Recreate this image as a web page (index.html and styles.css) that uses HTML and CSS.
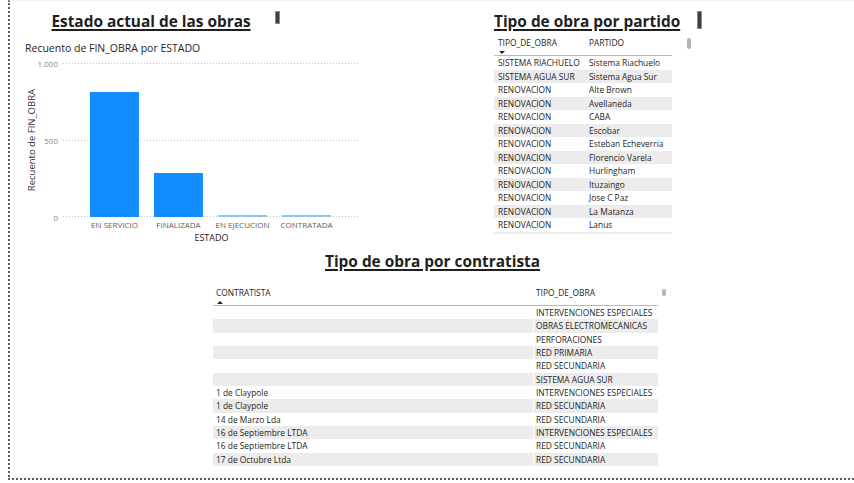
FILE: index.html
```html
<!DOCTYPE html>
<html lang="es">
<head>
<meta charset="utf-8">
<title>Obras</title>
<link rel="stylesheet" href="styles.css">
</head>
<body>
<div class="canvas">
  <div class="top-row">
    <section class="chart-visual">
      <div class="title-box title-left">
        <h2 class="v-title">Estado actual de las obras</h2>
        <span class="marker marker-short"></span>
      </div>
      <div class="chart-sub">Recuento de FIN_OBRA por ESTADO</div>
      <div class="chart-body">
        <div class="y-title"><span>Recuento de FIN_OBRA</span></div>
        <div class="y-ticks"><span>1.000</span><span>500</span><span>0</span></div>
        <div class="plot">
          <div class="bar" style="height:81.2%"></div>
          <div class="bar" style="height:28.6%"></div>
          <div class="bar bar-thin" style="height:1.3%"></div>
          <div class="bar bar-thin" style="height:1.3%"></div>
        </div>
        <div class="x-labels">
          <span>EN SERVICIO</span><span>FINALIZADA</span><span>EN EJECUCION</span><span>CONTRATADA</span>
        </div>
        <div class="x-title">ESTADO</div>
      </div>
    </section>

    <section class="partido-visual">
      <div class="title-box">
        <h2 class="v-title">Tipo de obra por partido</h2>
        <span class="marker marker-tall"></span>
      </div>
      <div class="table-wrap">
        <div class="tbl tbl-partido">
          <div class="thead">
            <div class="th"><span>TIPO_DE_OBRA</span><i class="sort sort-down"></i></div>
            <div class="th"><span>PARTIDO</span></div>
          </div>
          <div class="tbody">
            <div class="tr"><div>SISTEMA RIACHUELO</div><div>Sistema Riachuelo</div></div>
            <div class="tr"><div>SISTEMA AGUA SUR</div><div>Sistema Agua Sur</div></div>
            <div class="tr"><div>RENOVACION</div><div>Alte Brown</div></div>
            <div class="tr"><div>RENOVACION</div><div>Avellaneda</div></div>
            <div class="tr"><div>RENOVACION</div><div>CABA</div></div>
            <div class="tr"><div>RENOVACION</div><div>Escobar</div></div>
            <div class="tr"><div>RENOVACION</div><div>Esteban Echeverria</div></div>
            <div class="tr"><div>RENOVACION</div><div>Florencio Varela</div></div>
            <div class="tr"><div>RENOVACION</div><div>Hurlingham</div></div>
            <div class="tr"><div>RENOVACION</div><div>Ituzaingo</div></div>
            <div class="tr"><div>RENOVACION</div><div>Jose C Paz</div></div>
            <div class="tr"><div>RENOVACION</div><div>La Matanza</div></div>
            <div class="tr"><div>RENOVACION</div><div>Lanus</div></div>
            <div class="tr"><div></div><div></div></div>
          </div>
        </div>
        <div class="scroll scroll-partido"><span class="thumb"></span></div>
      </div>
    </section>
  </div>

  <section class="contratista-visual">
    <h2 class="v-title bottom-title">Tipo de obra por contratista</h2>
    <div class="table-wrap">
      <div class="tbl tbl-contratista">
        <div class="thead">
          <div class="th"><span>CONTRATISTA</span><i class="sort sort-up"></i></div>
          <div class="th"><span>TIPO_DE_OBRA</span></div>
        </div>
        <div class="tbody">
          <div class="tr"><div></div><div>INTERVENCIONES ESPECIALES</div></div>
          <div class="tr"><div></div><div>OBRAS ELECTROMECANICAS</div></div>
          <div class="tr"><div></div><div>PERFORACIONES</div></div>
          <div class="tr"><div></div><div>RED PRIMARIA</div></div>
          <div class="tr"><div></div><div>RED SECUNDARIA</div></div>
          <div class="tr"><div></div><div>SISTEMA AGUA SUR</div></div>
          <div class="tr"><div>1 de Claypole</div><div>INTERVENCIONES ESPECIALES</div></div>
          <div class="tr"><div>1 de Claypole</div><div>RED SECUNDARIA</div></div>
          <div class="tr"><div>14 de Marzo Lda</div><div>RED SECUNDARIA</div></div>
          <div class="tr"><div>16 de Septiembre LTDA</div><div>INTERVENCIONES ESPECIALES</div></div>
          <div class="tr"><div>16 de Septiembre LTDA</div><div>RED SECUNDARIA</div></div>
          <div class="tr"><div>17 de Octubre Ltda</div><div>RED SECUNDARIA</div></div>
        </div>
      </div>
      <div class="scroll scroll-contratista"><span class="thumb"></span></div>
    </div>
  </section>
</div>
</body>
</html>
```

FILE: styles.css
```css
* { box-sizing: border-box; }

html, body {
  margin: 0;
  padding: 0;
  background: #ffffff;
}

body {
  font-family: "Open Sans", "Noto Sans", sans-serif;
  color: #252423;
  overflow: hidden;
}

.canvas {
  margin-left: 8px;
  width: 846px;
  height: 480px;
  border-left: 2px dotted #5c5c5c;
  border-bottom: 2px dotted #5c5c5c;
  border-top: 1px solid #f2f2f2;
}

.top-row {
  display: flex;
  height: 244px;
}

/* ---------- titles ---------- */
.title-box {
  position: relative;
  height: 31px;
  padding-top: 11px;
}

.v-title {
  margin: 0;
  font-family: "Open Sans", sans-serif;
  font-weight: 700;
  font-size: 15.4px;
  line-height: 20px;
  color: #1f1f1f;
  text-decoration: underline;
  text-decoration-thickness: 1.5px;
  text-underline-offset: 2px;
  white-space: nowrap;
}

.title-left {
  width: 262px;
  text-align: center;
}

.marker {
  position: absolute;
  top: 10px;
  width: 5px;
  background: #404040;
  border: 1px solid #8a8a8a;
}

.marker-short { right: 2px; height: 13px; }
.marker-tall { left: 203px; height: 18px; }

/* ---------- chart ---------- */
.chart-visual {
  margin-left: 10px;
  width: 345px;
}

.chart-sub {
  margin-top: 9px;
  padding-left: 5px;
  font-size: 10.5px;
  line-height: 14px;
  color: #252423;
  white-space: nowrap;
}

.chart-body {
  margin-top: 8px;
  display: grid;
  grid-template-columns: 22px 21px 297px;
  grid-template-rows: 154px auto auto;
}

.y-title {
  grid-column: 1;
  grid-row: 1;
  display: flex;
  align-items: center;
  justify-content: center;
  padding-left: 1px;
}

.y-title span {
  writing-mode: vertical-rl;
  transform: rotate(180deg);
  font-size: 9.5px;
  line-height: 11px;
  color: #3a2c40;
  white-space: nowrap;
}

.y-ticks {
  grid-column: 2;
  grid-row: 1;
  display: flex;
  flex-direction: column;
  justify-content: space-between;
  padding-right: 5px;
}

.y-ticks span {
  display: flex;
  justify-content: flex-end;
  align-items: center;
  height: 10px;
  margin: -5px 0;
  font-size: 8px;
  color: #8a8886;
  white-space: nowrap;
}

.plot {
  grid-column: 3;
  grid-row: 1;
  display: flex;
  align-items: flex-end;
  gap: 15px;
  padding-left: 27px;
  background:
    linear-gradient(to right, #c8c6c4 1px, transparent 1px) 0 0 / 3px 1px repeat-x,
    linear-gradient(to right, #c8c6c4 1px, transparent 1px) 0 77px / 3px 1px repeat-x,
    linear-gradient(to right, #c8c6c4 1px, transparent 1px) 0 153px / 3px 1px repeat-x;
}

.bar {
  width: 49px;
  background: #118dff;
}

.bar-thin {
  background: #8cc4f5;
}

.x-labels {
  grid-column: 3;
  grid-row: 2;
  display: flex;
  gap: 15px;
  padding-left: 27px;
  margin-top: 3px;
}

.x-labels span {
  width: 49px;
  display: flex;
  justify-content: center;
  font-size: 8px;
  line-height: 10px;
  color: #605e5c;
  white-space: nowrap;
}

.x-title {
  grid-column: 3;
  grid-row: 3;
  text-align: center;
  font-size: 9px;
  line-height: 11px;
  margin-top: 2px;
  color: #252423;
}

/* ---------- tables ---------- */
.partido-visual {
  margin-left: 129px;
  width: 210px;
}

.table-wrap {
  display: flex;
  align-items: flex-start;
}

.partido-visual .table-wrap {
  margin-top: 4px;
}

.tbl {
  font-size: 8.4px;
  color: #252423;
}

.thead {
  display: flex;
  height: 20px;
  border-bottom: 1px solid #8ec2f0;
}

.th {
  padding: 1px 4px 0;
  line-height: 12px;
  white-space: nowrap;
}

.sort {
  display: block;
  width: 0;
  height: 0;
  margin-left: 1px;
  margin-top: 2px;
  border-left: 3px solid transparent;
  border-right: 3px solid transparent;
}

.sort-down { border-top: 3px solid #252423; }
.sort-up { border-bottom: 3px solid #252423; }

.tr {
  display: flex;
  height: 13.33px;
  line-height: 13.33px;
  white-space: nowrap;
}

.tr:nth-child(even) {
  background: #ececec;
}

.tbl-partido { width: 178px; }
.tbl-partido .tbody {
  height: 178px;
  overflow: hidden;
}
.tbl-partido .tr {
  height: 13.5px;
  line-height: 13.5px;
}
.tbl-partido .th:first-child,
.tbl-partido .tr > div:first-child { width: 91px; }
.tbl-partido .tr > div { padding-left: 4px; }

.scroll .thumb {
  display: block;
  width: 4px;
  background: #b3b3b3;
  border-radius: 2px;
}

.scroll-partido { margin-left: 15px; padding-top: 2px; }
.scroll-partido .thumb { height: 11px; }

.contratista-visual {
  margin-left: 203px;
}

.bottom-title {
  margin-top: 7px;
  padding-left: 112px;
}

.contratista-visual .table-wrap {
  margin-top: 14px;
}

.tbl-contratista { width: 445px; }
.tbl-contratista .th { padding-left: 3px; }
.tbl-contratista .th:first-child,
.tbl-contratista .tr > div:first-child { width: 320px; }
.tbl-contratista .tr > div { padding-left: 3px; }
.tbl-contratista .tr > div + div { border-left: 1px solid #ffffff; padding-left: 2px; }

.scroll-contratista { margin-left: 4px; padding-top: 3px; }
.scroll-contratista .thumb { height: 7px; }
```
